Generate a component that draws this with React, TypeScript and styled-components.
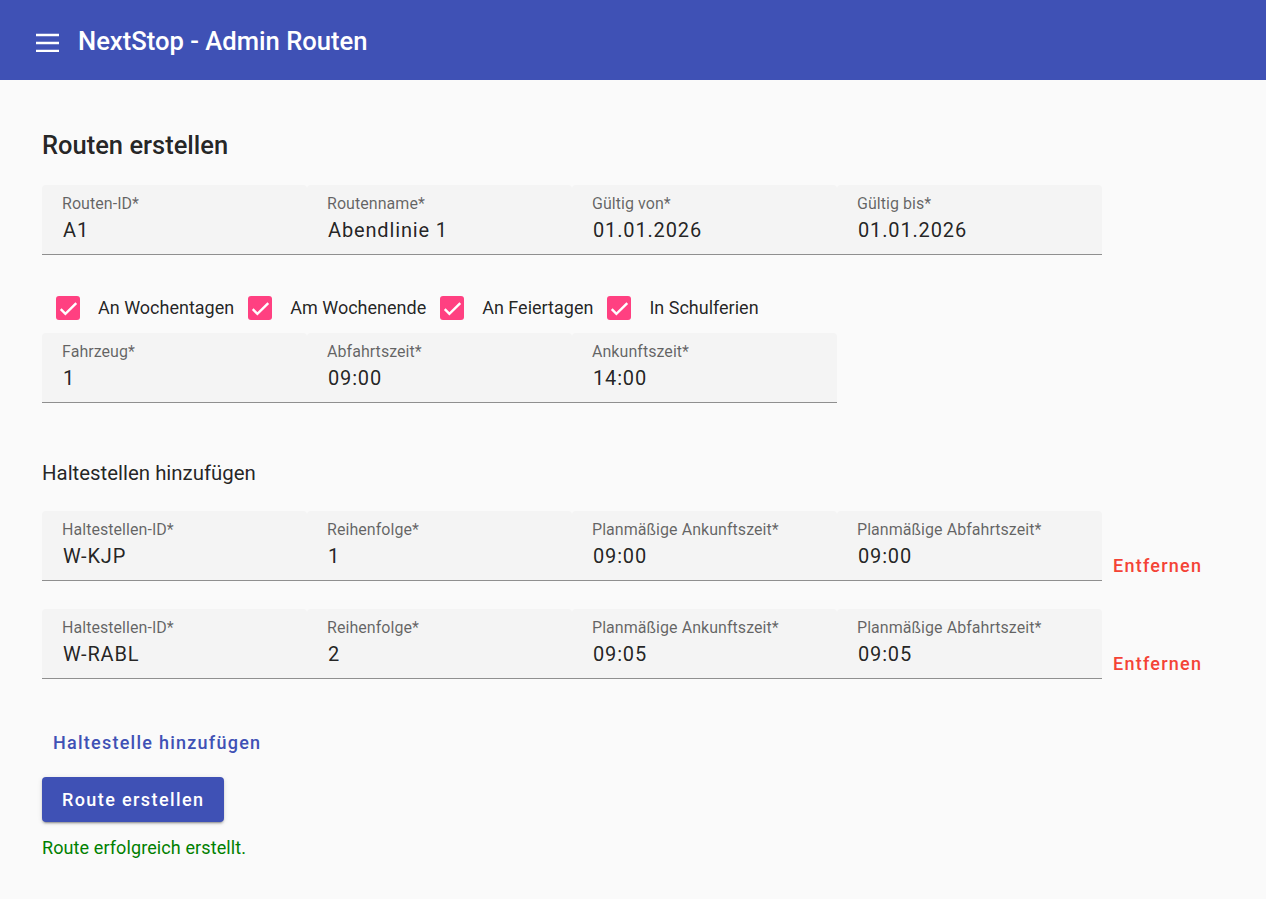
import React from "react";
import styled, { createGlobalStyle } from "styled-components";

const Global = createGlobalStyle`
  html, body { margin: 0; padding: 0; background: #fafafa; }
  body { font-family: Roboto, "Noto Sans", "Liberation Sans", sans-serif; color: rgba(0,0,0,0.87); }
  * { box-sizing: border-box; }
`;

const Toolbar = styled.header`
  height: 80px;
  background: #3f51b5;
  color: #fff;
  display: flex;
  align-items: center;
  padding-left: 36px;
  gap: 19px;
`;

const MenuIcon = styled.svg`
  width: 23px;
  height: 24px;
  display: block;
`;

const Title = styled.h1`
  margin: 2px 0 0;
  font-size: 25.6px;
  font-weight: 500;
  line-height: 32px;
  letter-spacing: 0;
`;

const Main = styled.main`
  padding: 49px 42px 40px;
  display: flex;
  flex-direction: column;
  align-items: flex-start;
`;

const Heading = styled.h2`
  margin: 0 0 24px;
  font-size: 25.5px;
  font-weight: 500;
  line-height: 32px;
  color: rgba(0,0,0,0.87);
`;

const SubHeading = styled.h3<{ $mt?: number }>`
  margin: ${(p) => p.$mt ?? 0}px 0 24px;
  font-size: 20.4px;
  font-weight: 400;
  line-height: 28px;
  color: rgba(0,0,0,0.87);
`;

const FieldRow = styled.div<{ $mt?: number }>`
  display: flex;
  align-items: flex-start;
  margin-top: ${(p) => p.$mt ?? 0}px;
`;

const Field = styled.div`
  width: 265px;
  height: 70px;
  background: #f4f4f4;
  border-radius: 4px 4px 0 0;
  border-bottom: 1px solid #8f8f8f;
  padding: 11px 20px 0;
  display: flex;
  flex-direction: column;
  gap: 5px;
`;

const Label = styled.span`
  font-size: 16px;
  line-height: 16px;
  color: rgba(0,0,0,0.6);
  letter-spacing: 0.05px;
  white-space: nowrap;
`;

const Value = styled.span`
  font-size: 20px;
  line-height: 26px;
  letter-spacing: 0.85px;
  padding-left: 1px;
  color: rgba(0,0,0,0.87);
  white-space: nowrap;
`;

const CheckRow = styled.div`
  display: flex;
  align-items: center;
  margin-top: 41px;
  height: 24px;
`;

const CheckItem = styled.label`
  display: flex;
  align-items: center;
  padding-left: 14px;
  gap: 18px;
  font-size: 18px;
  line-height: 24px;
  letter-spacing: 0;
  color: rgba(0,0,0,0.87);
`;

const Box = styled.span`
  width: 24px;
  height: 24px;
  border-radius: 3px;
  background: #ff4081;
  display: flex;
  align-items: center;
  justify-content: center;
`;

const TextButton = styled.button<{ $color: string }>`
  background: none;
  border: none;
  height: 36px;
  padding: 0 11px;
  font-family: inherit;
  font-size: 18px;
  font-weight: 500;
  letter-spacing: 1.25px;
  color: ${(p) => p.$color};
  cursor: pointer;
`;

const RemoveWrap = styled.div`
  align-self: flex-end;
  margin-bottom: -2px;
`;

const AddWrap = styled.div`
  margin-top: 45px;
`;

const PrimaryButton = styled.button`
  margin-top: 17px;
  height: 45px;
  padding: 0 20px;
  border: none;
  border-radius: 4px;
  background: #3f51b5;
  color: #fff;
  font-family: inherit;
  font-size: 18px;
  font-weight: 500;
  letter-spacing: 1.4px;
  box-shadow: 0 3px 1px -2px rgba(0,0,0,.2), 0 2px 2px 0 rgba(0,0,0,.14), 0 1px 5px 0 rgba(0,0,0,.12);
`;

const Success = styled.p`
  margin: 14px 0 0;
  font-size: 18px;
  line-height: 24px;
  letter-spacing: 0.1px;
  color: green;
`;

const Check = () => (
  <Box>
    <svg width="19" height="19" viewBox="0 0 24 24">
      <path d="M2.2 12.9 8.1 18.8 21.8 5.1" fill="none" stroke="#fff" strokeWidth="3" />
    </svg>
  </Box>
);

type F = [string, string];

const Fields = ({ items }: { items: F[] }) => (
  <>
    {items.map(([l, v]) => (
      <Field key={l}>
        <Label>{l}</Label>
        <Value>{v}</Value>
      </Field>
    ))}
  </>
);

const stops: F[][] = [
  [["Haltestellen-ID*", "W-KJP"], ["Reihenfolge*", "1"], ["Planmäßige Ankunftszeit*", "09:00"], ["Planmäßige Abfahrtszeit*", "09:00"]],
  [["Haltestellen-ID*", "W-RABL"], ["Reihenfolge*", "2"], ["Planmäßige Ankunftszeit*", "09:05"], ["Planmäßige Abfahrtszeit*", "09:05"]],
];

export default function App() {
  return (
    <>
      <Global />
      <Toolbar>
        <MenuIcon viewBox="0 0 23 24">
          <rect x="0" y="5.75" width="23" height="2.5" fill="#fff" />
          <rect x="0" y="13.75" width="23" height="2.5" fill="#fff" />
          <rect x="0" y="21.75" width="23" height="2.5" fill="#fff" />
        </MenuIcon>
        <Title>NextStop - Admin Routen</Title>
      </Toolbar>
      <Main>
        <Heading>Routen erstellen</Heading>
        <FieldRow>
          <Fields items={[["Routen-ID*", "A1"], ["Routenname*", "Abendlinie 1"], ["Gültig von*", "01.01.2026"], ["Gültig bis*", "01.01.2026"]]} />
        </FieldRow>
        <CheckRow>
          {["An Wochentagen", "Am Wochenende", "An Feiertagen", "In Schulferien"].map((t) => (
            <CheckItem key={t}>
              <Check />
              {t}
            </CheckItem>
          ))}
        </CheckRow>
        <FieldRow $mt={13}>
          <Fields items={[["Fahrzeug*", "1"], ["Abfahrtszeit*", "09:00"], ["Ankunftszeit*", "14:00"]]} />
        </FieldRow>
        <SubHeading $mt={56}>Haltestellen hinzufügen</SubHeading>
        {stops.map((s, i) => (
          <FieldRow key={i} $mt={i === 0 ? 0 : 28}>
            <Fields items={s} />
            <RemoveWrap>
              <TextButton $color="#f44336">Entfernen</TextButton>
            </RemoveWrap>
          </FieldRow>
        ))}
        <AddWrap>
          <TextButton $color="#3f51b5">Haltestelle hinzufügen</TextButton>
        </AddWrap>
        <PrimaryButton>Route erstellen</PrimaryButton>
        <Success>Route erfolgreich erstellt.</Success>
      </Main>
    </>
  );
}
